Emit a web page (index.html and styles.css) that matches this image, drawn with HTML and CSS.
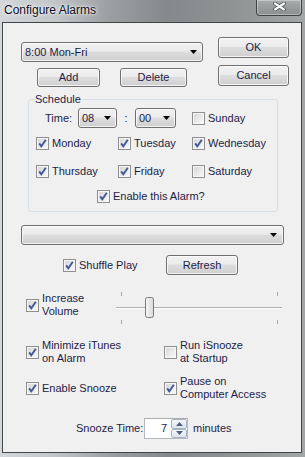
FILE: index.html
```html
<!DOCTYPE html>
<html lang="en">
<head>
  <meta charset="UTF-8" />
  <title>Configure Alarms</title>
  <link rel="stylesheet" href="styles.css">
</head>
<body>
<div class="window">
  <div class="titlebar">
    <span class="title">Configure Alarms</span>
    <span class="close">
      <svg width="13" height="9" viewBox="0 0 13 9"><path d="M2 1.5 L11 7.5 M11 1.5 L2 7.5" stroke="#3a3f41" stroke-width="3.6" stroke-linecap="round"/><path d="M2 1.5 L11 7.5 M11 1.5 L2 7.5" stroke="#fff" stroke-width="2.2" stroke-linecap="round"/></svg>
    </span>
  </div>

  <div class="client">
    <div class="top">
      <div class="top-left">
        <div class="combo combo-alarm"><span>8:00 Mon-Fri</span><svg class="arrow" width="7" height="4"><polygon points="0,0 7,0 3.5,4" fill="#000"/></svg></div>
        <div class="add-row">
          <button class="btn btn-add">Add</button>
          <button class="btn btn-delete">Delete</button>
        </div>
      </div>
      <div class="top-right">
        <button class="btn btn-ok">OK</button>
        <button class="btn btn-ok">Cancel</button>
      </div>
    </div>

    <fieldset class="schedule">
      <legend>Schedule</legend>
      <div class="days">
        <div class="time-row">
          <span class="time-label">Time:</span>
          <div class="combo combo-hour"><span>08</span><svg class="arrow" width="7" height="4"><polygon points="0,0 7,0 3.5,4" fill="#000"/></svg></div>
          <span class="colon">:</span>
          <div class="combo combo-min"><span>00</span><svg class="arrow" width="7" height="4"><polygon points="0,0 7,0 3.5,4" fill="#000"/></svg></div>
        </div>
        <label class="check"><span class="cb"></span>Sunday</label>

        <label class="check"><span class="cb"><svg width="11" height="11" viewBox="0 0 11 11"><path d="M2.2 5.4 L4.3 8.4 L8.8 1.8" fill="none" stroke="#44579a" stroke-width="1.9"/></svg></span>Monday</label>
        <label class="check"><span class="cb"><svg width="11" height="11" viewBox="0 0 11 11"><path d="M2.2 5.4 L4.3 8.4 L8.8 1.8" fill="none" stroke="#44579a" stroke-width="1.9"/></svg></span>Tuesday</label>
        <label class="check"><span class="cb"><svg width="11" height="11" viewBox="0 0 11 11"><path d="M2.2 5.4 L4.3 8.4 L8.8 1.8" fill="none" stroke="#44579a" stroke-width="1.9"/></svg></span>Wednesday</label>

        <label class="check"><span class="cb"><svg width="11" height="11" viewBox="0 0 11 11"><path d="M2.2 5.4 L4.3 8.4 L8.8 1.8" fill="none" stroke="#44579a" stroke-width="1.9"/></svg></span>Thursday</label>
        <label class="check"><span class="cb"><svg width="11" height="11" viewBox="0 0 11 11"><path d="M2.2 5.4 L4.3 8.4 L8.8 1.8" fill="none" stroke="#44579a" stroke-width="1.9"/></svg></span>Friday</label>
        <label class="check"><span class="cb"></span>Saturday</label>

        <label class="check enable"><span class="cb"><svg width="11" height="11" viewBox="0 0 11 11"><path d="M2.2 5.4 L4.3 8.4 L8.8 1.8" fill="none" stroke="#44579a" stroke-width="1.9"/></svg></span>Enable this Alarm?</label>
      </div>
    </fieldset>

    <div class="combo combo-song"><span></span><svg class="arrow" width="7" height="4"><polygon points="0,0 7,0 3.5,4" fill="#000"/></svg></div>

    <div class="shuffle-row">
      <label class="check shuffle"><span class="cb"><svg width="11" height="11" viewBox="0 0 11 11"><path d="M2.2 5.4 L4.3 8.4 L8.8 1.8" fill="none" stroke="#44579a" stroke-width="1.9"/></svg></span>Shuffle Play</label>
      <button class="btn btn-refresh">Refresh</button>
    </div>

    <div class="vol-row">
      <label class="check multi vol"><span class="cb"><svg width="11" height="11" viewBox="0 0 11 11"><path d="M2.2 5.4 L4.3 8.4 L8.8 1.8" fill="none" stroke="#44579a" stroke-width="1.9"/></svg></span><span>Increase<br>Volume</span></label>
      <svg class="slider" width="166" height="32" viewBox="0 0 166 32">
        <defs>
          <linearGradient id="thumb" x1="0" y1="0" x2="1" y2="0">
            <stop offset="0" stop-color="#f7f7f7"/>
            <stop offset="1" stop-color="#d9d9d9"/>
          </linearGradient>
        </defs>
        <line x1="5.5" y1="0" x2="5.5" y2="4" stroke="#a7a7a7"/>
        <line x1="161.5" y1="0" x2="161.5" y2="4" stroke="#a7a7a7"/>
        <line x1="5.5" y1="28" x2="5.5" y2="32" stroke="#a7a7a7"/>
        <line x1="161.5" y1="28" x2="161.5" y2="32" stroke="#a7a7a7"/>
        <line x1="0" y1="15.5" x2="166" y2="15.5" stroke="#b0b0b0"/>
        <line x1="0" y1="16.5" x2="166" y2="16.5" stroke="#ffffff"/>
        <rect x="29.5" y="5.5" width="8" height="20" rx="2" fill="url(#thumb)" stroke="#7a7a7a"/>
      </svg>
    </div>

    <div class="opt-row">
      <label class="check multi"><span class="cb"><svg width="11" height="11" viewBox="0 0 11 11"><path d="M2.2 5.4 L4.3 8.4 L8.8 1.8" fill="none" stroke="#44579a" stroke-width="1.9"/></svg></span><span>Minimize iTunes<br>on Alarm</span></label>
      <label class="check multi"><span class="cb"></span><span>Run iSnooze<br>at Startup</span></label>
    </div>

    <div class="opt-row row-snooze">
      <label class="check"><span class="cb"><svg width="11" height="11" viewBox="0 0 11 11"><path d="M2.2 5.4 L4.3 8.4 L8.8 1.8" fill="none" stroke="#44579a" stroke-width="1.9"/></svg></span>Enable Snooze</label>
      <label class="check multi"><span class="cb"><svg width="11" height="11" viewBox="0 0 11 11"><path d="M2.2 5.4 L4.3 8.4 L8.8 1.8" fill="none" stroke="#44579a" stroke-width="1.9"/></svg></span><span>Pause on<br>Computer Access</span></label>
    </div>

    <div class="time-snooze">
      <span class="snooze-label">Snooze Time:</span>
      <div class="spin">
        <span class="spin-val">7</span>
        <div class="spin-btns">
          <span class="sbtn"><svg width="7" height="4"><polygon points="0,4 7,4 3.5,0" fill="#4d6185"/></svg></span>
          <span class="sbtn"><svg width="7" height="4"><polygon points="0,0 7,0 3.5,4" fill="#4d6185"/></svg></span>
        </div>
      </div>
      <span class="minutes">minutes</span>
    </div>
  </div>
</div>
</body>
</html>
```

FILE: styles.css
```css
body { margin: 0; font-family: "Liberation Sans", Arial, sans-serif; font-size: 11px; line-height: 13px; color: #1c1c48; }

.window {
  width: 305px; height: 457px; overflow: hidden;
  display: flex; flex-direction: column;
  background: linear-gradient(90deg, #d3d7da 0%, #c2c6c8 18%, #9b9fa1 36%, #85898b 55%, #8e9293 75%, #a2a6a6 100%);
}

/* title bar */
.titlebar { height: 22px; flex-shrink: 0; display: flex; justify-content: space-between; align-items: flex-start; }
.title { padding: 3px 0 0 4px; font-size: 12px; line-height: 14px; color: #0c0c24; text-shadow: 0 0 5px #fff, 0 0 2px #fff; }
.close {
  width: 46px; height: 16px; margin-right: 3px; box-sizing: border-box; padding-bottom: 2px;
  border: 1px solid #3e4446; border-top: 0; border-radius: 0 0 4px 4px;
  box-shadow: inset 0 0 0 1px rgba(255,255,255,.35);
  background: linear-gradient(#a7abac, #8a8e8f);
  display: flex; align-items: center; justify-content: center;
}

.client { flex: 1; margin: 0 3px 4px 2px; border: 1px solid #3f4747; background: #f0f0f0; }

/* vista style controls */
.btn, .combo {
  box-sizing: border-box; border: 1px solid #707070; border-radius: 3px;
  background: linear-gradient(#f2f2f2 0%, #ebebeb 45%, #dddddd 50%, #cfcfcf 100%);
  box-shadow: inset 0 0 0 1px rgba(255,255,255,.75);
  font: inherit; color: inherit; padding: 0;
}
.combo { display: flex; align-items: center; justify-content: space-between; padding: 0 5px 0 3px; height: 20px; }
.combo .arrow { flex-shrink: 0; }

.top { display: flex; padding: 14px 0 0 18px; }
.top-left { width: 182px; padding-top: 5px; }
.add-row { display: flex; gap: 20px; margin-top: 6px; padding-left: 16px; }
.btn-add { width: 63px; height: 19px; }
.btn-delete { width: 67px; height: 19px; }
.top-right { margin-left: 15px; display: flex; flex-direction: column; gap: 7px; }
.btn-ok { width: 71px; height: 21px; }

/* schedule group */
.schedule {
  width: 250px; box-sizing: border-box; min-width: 0;
  margin: 6px 0 0 25px; padding: 0 0 2px 0;
  border: 1px solid #d5dfe5; border-radius: 3px;
}
.schedule legend { margin-left: 5px; padding: 0 1px; line-height: 13px; }
.days {
  display: grid; margin-top: 2px; padding-left: 7px;
  grid-template-columns: 82px 74px 1fr;
  grid-template-rows: 20px 31px 25px 25px;
  align-items: center;
}
.time-row { grid-column: 1 / 3; display: flex; align-items: center; padding-left: 9px; }
.time-label { width: 33px; }
.combo-hour { width: 39px; }
.colon { width: 18px; text-align: center; }
.combo-min { width: 41px; }
.enable { grid-column: 1 / -1; padding-left: 61px; }

.check { display: flex; align-items: center; gap: 3px; white-space: nowrap; }
.cb {
  width: 13px; height: 13px; box-sizing: border-box; flex-shrink: 0;
  border: 1px solid #8e8f8f;
  background: linear-gradient(135deg, #d3d3d3 0%, #ececec 60%, #fbfbfb 100%);
  box-shadow: inset 0 0 0 1px #f6f6f6;
  display: flex; align-items: center; justify-content: center;
}
.cb svg { display: block; }

.combo-song { width: 263px; margin: 13px 0 0 18px; padding-right: 6px; }

.shuffle-row { display: flex; align-items: center; height: 20px; margin-top: 10px; padding-left: 60px; }
.shuffle { width: 103px; }
.btn-refresh { width: 72px; height: 20px; }

/* options */
.vol-row { display: flex; height: 32px; margin-top: 17px; padding-left: 23px; }
.vol { width: 90px; align-self: flex-start; }
.slider { display: block; }

.opt-row { display: grid; grid-template-columns: 138px auto; align-items: center; margin-top: 15px; padding-left: 23px; }
.row-snooze { margin-top: 10px; }

.time-snooze { display: flex; align-items: center; margin-top: 17px; padding-left: 73px; }
.snooze-label { width: 68px; }
.spin { display: flex; width: 44px; height: 21px; box-sizing: border-box; border: 1px solid #b5b8bf; border-top-color: #abadb3; background: #fff; }
.spin-val { flex: 1; text-align: right; padding-right: 4px; line-height: 19px; }
.spin-btns { display: flex; flex-direction: column; width: 16px; padding: 0 0 0 0; }
.sbtn {
  flex: 1; box-sizing: border-box; border: 1px solid #a8b3c4; border-radius: 2px;
  background: linear-gradient(#f4f6f9, #dfe4ec);
  display: flex; align-items: center; justify-content: center;
}
.minutes { margin-left: 5px; }
```
